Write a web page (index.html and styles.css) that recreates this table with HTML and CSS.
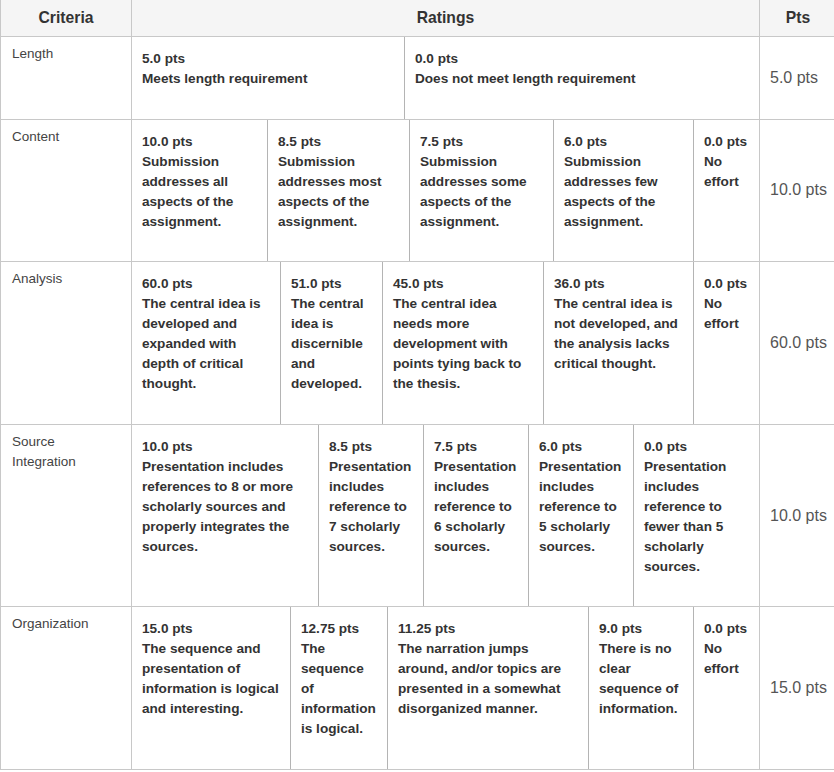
FILE: index.html
```html
<!DOCTYPE html>
<html lang="en">
<head>
<meta charset="utf-8">
<title>Rubric</title>
<link rel="stylesheet" href="styles.css">
</head>
<body>
<div class="rubric">
  <div class="row head">
    <div class="crit">Criteria</div>
    <div class="ratings">Ratings</div>
    <div class="pts">Pts</div>
  </div>

  <div class="row">
    <div class="crit">Length</div>
    <div class="ratings">
      <div class="tier" style="flex-basis:273px"><div class="pv">5.0 pts</div><div>Meets length requirement</div></div>
      <div class="tier last"><div class="pv">0.0 pts</div><div>Does not meet length requirement</div></div>
    </div>
    <div class="pts">5.0 pts</div>
  </div>

  <div class="row">
    <div class="crit">Content</div>
    <div class="ratings">
      <div class="tier" style="flex-basis:136px"><div class="pv">10.0 pts</div><div>Submission addresses all aspects of the assignment.</div></div>
      <div class="tier" style="flex-basis:142px"><div class="pv">8.5 pts</div><div>Submission addresses most aspects of the assignment.</div></div>
      <div class="tier" style="flex-basis:144px"><div class="pv">7.5 pts</div><div>Submission addresses some aspects of the assignment.</div></div>
      <div class="tier" style="flex-basis:140px"><div class="pv">6.0 pts</div><div>Submission addresses few aspects of the assignment.</div></div>
      <div class="tier last"><div class="pv">0.0 pts</div><div>No effort</div></div>
    </div>
    <div class="pts">10.0 pts</div>
  </div>

  <div class="row">
    <div class="crit">Analysis</div>
    <div class="ratings">
      <div class="tier" style="flex-basis:149px"><div class="pv">60.0 pts</div><div>The central idea is developed and expanded with depth of critical thought.</div></div>
      <div class="tier" style="flex-basis:102px"><div class="pv">51.0 pts</div><div>The central idea is discernible and developed.</div></div>
      <div class="tier" style="flex-basis:161px"><div class="pv">45.0 pts</div><div>The central idea needs more development with points tying back to the thesis.</div></div>
      <div class="tier" style="flex-basis:150px"><div class="pv">36.0 pts</div><div>The central idea is not developed, and the analysis lacks critical thought.</div></div>
      <div class="tier last"><div class="pv">0.0 pts</div><div>No effort</div></div>
    </div>
    <div class="pts">60.0 pts</div>
  </div>

  <div class="row">
    <div class="crit">Source Integration</div>
    <div class="ratings">
      <div class="tier" style="flex-basis:187px"><div class="pv">10.0 pts</div><div>Presentation includes references to 8 or more scholarly sources and properly integrates the sources.</div></div>
      <div class="tier" style="flex-basis:105px"><div class="pv">8.5 pts</div><div>Presentation includes reference to 7 scholarly sources.</div></div>
      <div class="tier" style="flex-basis:105px"><div class="pv">7.5 pts</div><div>Presentation includes reference to 6 scholarly sources.</div></div>
      <div class="tier" style="flex-basis:105px"><div class="pv">6.0 pts</div><div>Presentation includes reference to 5 scholarly sources.</div></div>
      <div class="tier last"><div class="pv">0.0 pts</div><div>Presentation includes reference to fewer than 5 scholarly sources.</div></div>
    </div>
    <div class="pts">10.0 pts</div>
  </div>

  <div class="row">
    <div class="crit">Organization</div>
    <div class="ratings">
      <div class="tier" style="flex-basis:159px"><div class="pv">15.0 pts</div><div>The sequence and presentation of information is logical and interesting.</div></div>
      <div class="tier" style="flex-basis:97px"><div class="pv">12.75 pts</div><div>The sequence of information is logical.</div></div>
      <div class="tier" style="flex-basis:201px"><div class="pv">11.25 pts</div><div>The narration jumps around, and/or topics are presented in a somewhat disorganized manner.</div></div>
      <div class="tier" style="flex-basis:105px"><div class="pv">9.0 pts</div><div>There is no clear sequence of information.</div></div>
      <div class="tier last"><div class="pv">0.0 pts</div><div>No effort</div></div>
    </div>
    <div class="pts">15.0 pts</div>
  </div>
</div>
</body>
</html>
```

FILE: styles.css
```css
* {
  box-sizing: border-box;
}

html, body {
  margin: 0;
  padding: 0;
  background: #ffffff;
}

body {
  font-family: "Liberation Sans", Arial, Helvetica, sans-serif;
  color: #333333;
}

.rubric {
  width: 836px;
  border-left: 1px solid #c8c8c8;
}

.row {
  display: flex;
  border-bottom: 1px solid #c8c8c8;
}

.crit {
  flex: 0 0 131px;
  border-right: 1px solid #c8c8c8;
  padding: 7px 11px;
  font-size: 13.5px;
  line-height: 20px;
  color: #444444;
}

.ratings {
  flex: 0 0 628px;
  display: flex;
  border-right: 1px solid #c8c8c8;
}

.pts {
  flex: 1 1 auto;
  display: flex;
  align-items: center;
  padding: 0 10px;
  font-size: 16px;
  color: #555555;
  white-space: nowrap;
}

.tier {
  flex-grow: 0;
  flex-shrink: 0;
  border-right: 1px solid #b4b4b4;
  padding: 12px 10px 29.6px;
  font-size: 13.6px;
  font-weight: bold;
  line-height: 20px;
  color: #333333;
}

.tier.last {
  flex: 1 1 0;
  border-right: none;
}

.pv {
  white-space: nowrap;
}

.head {
  background: #f5f5f5;
  height: 37px;
}

.head .crit,
.head .ratings,
.head .pts {
  display: flex;
  align-items: center;
  justify-content: center;
  padding: 0;
  font-size: 15.7px;
  font-weight: bold;
  color: #333333;
  line-height: 36px;
}
```
